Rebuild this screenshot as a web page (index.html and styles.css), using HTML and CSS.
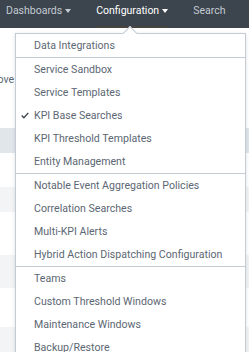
FILE: index.html
```html
<!DOCTYPE html>
<html lang="en">
<head>
    <meta charset="UTF-8">
    <meta name="viewport" content="width=device-width, initial-scale=1.0">
    <title>Configuration</title>
    <link rel="stylesheet" href="styles.css">
</head>
<body>

<header class="app-bar">
    <nav class="app-nav">
        <a class="nav-item">Dashboards <span class="caret"></span></a>
        <a class="nav-item active">Configuration <span class="caret"></span></a>
        <a class="nav-item">Search</a>
    </nav>
</header>

<main class="page">
    <!-- tabela por tras do menu -->
    <div class="table">
        <div class="row row-tall"><span class="cell">Remove</span></div>
        <div class="row row-hover"></div>
        <div class="row row-white"></div>
        <div class="row row-odd"></div>
        <div class="row row-white2"></div>
        <div class="row row-odd row-odd2"></div>
        <div class="row row-white3"></div>
        <div class="row row-odd"></div>
    </div>

    <!-- menu de configuracao -->
    <div class="dropdown">
        <span class="dropdown-arrow"></span>
        <ul class="menu-group">
            <li>Data Integrations</li>
        </ul>
        <ul class="menu-group">
            <li>Service Sandbox</li>
            <li>Service Templates</li>
            <li class="checked">
                <svg class="check" width="8" height="7" viewBox="0 0 8 7">
                    <polyline points="0.7,3.6 2.9,5.8 7.3,0.9" fill="none" stroke="#3c444d" stroke-width="1.4"/>
                </svg>
                KPI Base Searches
            </li>
            <li>KPI Threshold Templates</li>
            <li>Entity Management</li>
        </ul>
        <ul class="menu-group">
            <li>Notable Event Aggregation Policies</li>
            <li>Correlation Searches</li>
            <li>Multi-KPI Alerts</li>
            <li>Hybrid Action Dispatching Configuration</li>
        </ul>
        <ul class="menu-group">
            <li>Teams</li>
            <li>Custom Threshold Windows</li>
            <li>Maintenance Windows</li>
            <li>Backup/Restore</li>
        </ul>
    </div>
</main>

</body>
</html>
```

FILE: styles.css
```css
/* Layout geral */
body {
    margin: 0;
    padding: 0;
    font-family: Roboto, Lato, Arial, sans-serif;
    background-color: #fff;
    overflow: hidden;
}

/* Barra superior */
.app-bar {
    height: 28px;
    background-color: #3c444d;
}

.app-nav {
    display: flex;
    height: 100%;
    padding-left: 6px;
    gap: 25px;
}

.nav-item {
    display: flex;
    align-items: center;
    height: 100%;
    color: #c3cbd4;
    font-size: 10.5px;
    padding-bottom: 7px;
    box-sizing: border-box;
    white-space: nowrap;
}

.nav-item.active {
    color: #fff;
    box-shadow: inset 0 -2px 0 #48443f;
}

.caret {
    width: 0;
    height: 0;
    margin-left: 3px;
    margin-top: 1px;
    border-left: 3px solid transparent;
    border-right: 3px solid transparent;
    border-top: 4px solid currentColor;
}

/* Tabela de fundo */
.page {
    position: relative;
}

.table {
    display: flex;
    flex-direction: column;
}

.row {
    height: 33px;
}

.row-tall {
    height: 100px;
    display: flex;
    align-items: center;
}

.cell {
    font-size: 10.6px;
    color: #5c6773;
    margin-left: -24px;
    padding-top: 2px;
}

.row-hover {
    height: 25px;
    background-color: #e1e6eb;
}

.row-white {
    height: 34px;
}

.row-odd {
    height: 25px;
    background-color: #f2f4f5;
}

.row-odd2 {
    height: 33px;
}

.row-white2 {
    height: 43px;
}

.row-white3 {
    height: 39px;
}

/* Menu suspenso */
.dropdown {
    position: absolute;
    top: 5px;
    left: 15px;
    width: 229px;
    background-color: #fff;
    border: 1px solid #c3cbd4;
    box-shadow: 0 1px 4px rgba(0, 0, 0, 0.12);
}

.dropdown-arrow {
    position: absolute;
    top: -6px;
    left: 109px;
    width: 9px;
    height: 9px;
    background-color: #fff;
    border-top: 1px solid #c3cbd4;
    border-left: 1px solid #c3cbd4;
    transform: rotate(45deg);
}

.menu-group {
    list-style: none;
    margin: 0;
    padding: 0;
    border-top: 1px solid #c3cbd4;
}

.menu-group:first-of-type {
    border-top: none;
}

.menu-group li {
    position: relative;
    height: 23px;
    line-height: 23px;
    padding-left: 18px;
    font-size: 10.6px;
    color: #5c6773;
    white-space: nowrap;
}

.check {
    position: absolute;
    left: 5px;
    top: 8px;
}
```
